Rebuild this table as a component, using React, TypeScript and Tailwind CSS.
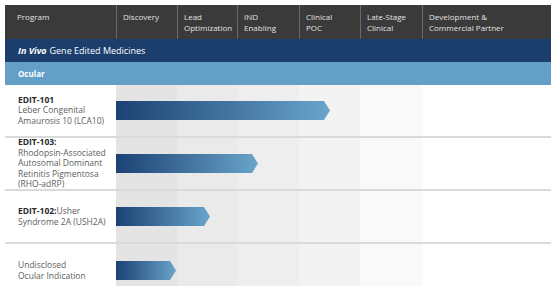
import type { ReactNode } from 'react'

const stages = [
  { label: ['Discovery'], w: 'w-[61px]', bg: 'bg-[#e4e4e4]' },
  { label: ['Lead', 'Optimization'], w: 'w-[60px]', bg: 'bg-[#eaeaea]' },
  { label: ['IND', 'Enabling'], w: 'w-[62px]', bg: 'bg-[#eeeeee]' },
  { label: ['Clinical', 'POC'], w: 'w-[61px]', bg: 'bg-[#f3f3f3]' },
  { label: ['Late-Stage', 'Clinical'], w: 'w-[62px]', bg: 'bg-[#f9f9f9]' },
  { label: ['Development &', 'Commercial Partner'], w: 'w-[129px]', bg: 'bg-white' },
]

const programs: { lines: ReactNode; bar: string }[] = [
  {
    lines: (
      <>
        <b className="text-[#2a2a2a]">EDIT-101</b>
        <br />
        Leber Congenital
        <br />
        Amaurosis 10 (LCA10)
      </>
    ),
    bar: 'w-[214px]',
  },
  {
    lines: (
      <>
        <b className="text-[#2a2a2a]">EDIT-103:</b>
        <br />
        Rhodopsin-Associated
        <br />
        Autosomal Dominant
        <br />
        Retinitis Pigmentosa
        <br />
        (RHO-adRP)
      </>
    ),
    bar: 'w-[142px]',
  },
  {
    lines: (
      <>
        <b className="text-[#2a2a2a]">EDIT-102:</b>Usher
        <br />
        Syndrome 2A (USH2A)
      </>
    ),
    bar: 'w-[94px]',
  },
  {
    lines: (
      <>
        Undisclosed
        <br />
        Ocular Indication
      </>
    ),
    bar: 'w-[60px]',
  },
]

function Bar({ w }: { w: string }) {
  return (
    <div
      className={`${w} h-[19px] bg-gradient-to-r from-[#1c4273] to-[#6aa5cb] [clip-path:polygon(0_0,calc(100%-6px)_0,100%_50%,calc(100%-6px)_100%,0_100%)]`}
    />
  )
}

export default function App() {
  return (
    <div className="w-[554px] h-[286px] overflow-hidden bg-white pt-[5px] pl-[5px] font-['Open_Sans','Liberation_Sans',sans-serif]">
      <div className="w-[546px]">
        {/* stage header */}
        <div className="flex h-[34px] bg-[#3a3a3a] text-[8px] leading-[10.5px] text-[#e2e2e2]">
          <div className="w-[111px] pl-[12px] pt-[7px]">Program</div>
          {stages.map((s) => (
            <div key={s.label.join()} className={`${s.w} border-l border-[#6a6a6a] pl-[6px] pt-[7px]`}>
              {s.label.map((l) => (
                <div key={l}>{l}</div>
              ))}
            </div>
          ))}
        </div>

        <div className="flex h-[23px] items-center bg-[#1b3e6d] pl-[13px] text-[9px] text-white">
          <b className="mr-[3px] italic">In Vivo</b>Gene Edited Medicines
        </div>
        <div className="flex h-[23px] items-center bg-[#639fc7] pl-[13px] text-[8px] font-bold text-white">
          Ocular
        </div>

        {/* pipeline rows over the stage column shading */}
        <div className="relative">
          <div className="absolute inset-0 flex">
            <div className="w-[111px]" />
            {stages.map((s) => (
              <div key={s.label.join()} className={`${s.w} ${s.bg}`} />
            ))}
          </div>
          {programs.map((p, i) => (
            <div
              key={i}
              className={`relative flex h-[53px] items-center ${i < programs.length - 1 ? 'border-b-2 border-[#dadada]' : ''}`}
            >
              <div className="w-[111px] pl-[13px] text-[8.5px] leading-[10.6px] text-[#5e5e5e]">{p.lines}</div>
              <Bar w={p.bar} />
            </div>
          ))}
        </div>
      </div>
    </div>
  )
}
